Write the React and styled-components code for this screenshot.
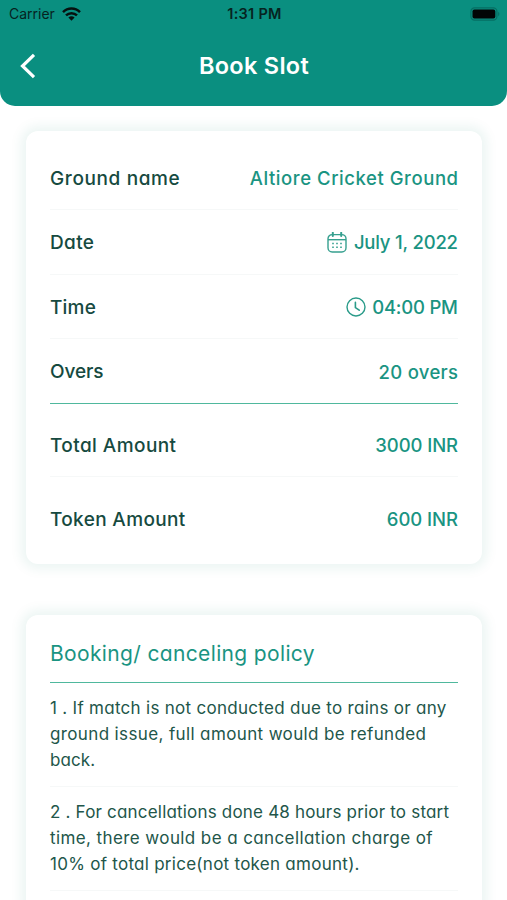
import React from 'react';
import styled, { createGlobalStyle, ThemeProvider } from 'styled-components';

const theme = {
  primary: '#0a8f80',
  value: '#1a9482',
  label: '#164a40',
  body: '#22564a',
  accentLine: '#4fb89d',
  line: '#f6f8f8',
};

const GlobalStyle = createGlobalStyle`
  * {
    box-sizing: border-box;
  }
  body {
    background: #fff;
    font-family: Inter, 'Open Sans', sans-serif;
    font-feature-settings: 'cv11' 1;
    margin: 0;
  }
`;

const Screen = styled.div`
  height: 900px;
  overflow: hidden;
  width: 507px;
`;

const Header = styled.header`
  background: ${({ theme }) => theme.primary};
  border-radius: 0 0 15px 15px;
  height: 106px;
`;

const StatusBar = styled.div`
  align-items: center;
  color: #06231f;
  display: grid;
  font-feature-settings: normal;
  font-size: 14px;
  grid-template-columns: 1fr auto 1fr;
  height: 27px;
  padding: 0 7px 0 9px;
`;

const Carrier = styled.div`
  align-items: center;
  display: flex;
  gap: 7px;
`;

const Clock = styled.div`
  font-size: 14.5px;
  font-weight: 600;
  letter-spacing: 0.3px;
`;

const BatteryBox = styled.div`
  display: flex;
  justify-content: flex-end;
`;

const TitleBar = styled.div`
  align-items: center;
  display: grid;
  grid-template-columns: 60px 1fr 60px;
  height: 77px;
`;

const BackButton = styled.button`
  background: none;
  border: 0;
  display: flex;
  padding: 0 0 0 19px;
`;

const Title = styled.h1`
  color: #fff;
  font-size: 23.5px;
  font-weight: 600;
  letter-spacing: 0.3px;
  margin: 0;
  padding-left: 1px;
  text-align: center;
`;

const Card = styled.section`
  background: #fff;
  border-radius: 12px;
  box-shadow: 0 0 12px 5px rgba(10, 125, 105, 0.08);
  margin: ${({ $top }) => $top}px 25px 0 26px;
  padding: ${({ $pad }) => $pad};
`;

const Row = styled.div`
  align-items: center;
  border-bottom: ${({ theme, $last }) => ($last ? 'none' : `1px solid ${theme.line}`)};
  display: flex;
  height: ${({ $height }) => $height}px;
  justify-content: space-between;
  line-height: 24px;
  padding-top: ${({ $offset }) => $offset || 0}px;
`;

const Separator = styled.div`
  background: ${({ theme }) => theme.accentLine};
  height: 1px;
`;

const Label = styled.span`
  color: ${({ theme }) => theme.label};
  font-size: 19px;
  font-weight: 500;
  letter-spacing: ${({ $tracking }) => $tracking}px;
  padding-top: 1px;
`;

const Value = styled.span`
  align-items: center;
  color: ${({ theme }) => theme.value};
  display: flex;
  font-size: 18.5px;
  font-weight: 500;
  gap: ${({ $gap }) => $gap || 0}px;
  letter-spacing: ${({ $tracking }) => $tracking}px;
  margin-right: ${({ $tracking }) => -$tracking}px;
`;

const PolicyTitle = styled.h2`
  color: ${({ theme }) => theme.value};
  font-size: 21px;
  font-weight: 400;
  height: 67px;
  letter-spacing: 0.35px;
  line-height: 77px;
  margin: 0;
`;

const PolicyItem = styled.div`
  border-bottom: 1px solid ${({ theme }) => theme.line};
  height: 104px;
  padding-top: 13px;
`;

const PolicyLine = styled.div`
  color: ${({ theme }) => theme.body};
  font-size: 17px;
  letter-spacing: ${({ $tracking }) => $tracking}px;
  line-height: 25.75px;
  white-space: nowrap;
`;

const WifiIcon = () => (
  <svg width="19" height="14" viewBox="0 0 19 14" fill="none" stroke="#06110f" strokeWidth="2.5">
    <path d="M1 5.2C5.8 0.4 13.2 0.4 18 5.2" />
    <path d="M4 8.4C7.1 5.4 11.9 5.4 15 8.4" />
    <path d="M9.5 13.7L6.4 10.5C8.1 8.9 10.9 8.9 12.6 10.5Z" fill="#06110f" stroke="none" />
  </svg>
);

const BatteryIcon = () => (
  <svg width="30" height="14" viewBox="0 0 30 14">
    <rect x="0.9" y="0.9" width="26" height="12.2" rx="3.6" fill="none" stroke="#066f63" strokeWidth="1.2" />
    <rect x="2.5" y="2.5" width="22.8" height="9" rx="1.9" fill="#020505" />
    <path d="M28.2 4.8C29.8 5.6 29.8 8.4 28.2 9.2Z" fill="#066f63" />
  </svg>
);

const BackIcon = () => (
  <svg width="17" height="26" viewBox="0 0 17 26" fill="none" stroke="#fff" strokeWidth="3.2">
    <path d="M15 1.8L3.5 13L15 24.2" />
  </svg>
);

const CalendarIcon = () => (
  <svg width="20" height="21" viewBox="0 0 20 21" fill="none" stroke="#36a08f" strokeWidth="1.4">
    <rect x="1" y="2.6" width="18" height="17.4" rx="4.2" />
    <path d="M1 7.7H19" />
    <path d="M5.8 0.7V4M14.2 0.7V4" strokeWidth="2" strokeLinecap="round" />
    <path d="M5.2 11.4H6.8M9.2 11.4H10.8M13.2 11.4H14.8M5.2 15.2H6.8M9.2 15.2H10.8M13.2 15.2H14.8" strokeWidth="1.5" />
  </svg>
);

const TimeIcon = () => (
  <svg width="20" height="20" viewBox="0 0 20 20" fill="none" stroke="#2a9b89" strokeWidth="1.4">
    <circle cx="10" cy="10" r="9" />
    <path d="M9.4 5.4V10.6L13.2 13.2" strokeWidth="1.6" strokeLinecap="round" />
  </svg>
);

const details = [
  { label: 'Ground name', labelTracking: 0.62, value: 'Altiore Cricket Ground', tracking: 0.55, height: 64, offset: 1 },
  { label: 'Date', labelTracking: 0.35, value: 'July 1, 2022', tracking: -0.2, height: 65, offset: 0, icon: <CalendarIcon />, gap: 7 },
  { label: 'Time', labelTracking: 0.2, value: '04:00 PM', tracking: -0.2, height: 64, offset: 1, icon: <TimeIcon />, gap: 6 },
  { label: 'Overs', labelTracking: -0.1, value: '20 overs', tracking: 0.3, height: 64, offset: 1, last: true },
];

const amounts = [
  { label: 'Total Amount', labelTracking: 0.42, value: '3000 INR', tracking: -0.1, height: 73, offset: 10 },
  { label: 'Token Amount', labelTracking: 0.35, value: '600 INR', tracking: -0.05, height: 74, offset: 10, last: true },
];

const policies = [
  [
    { text: '1 . If match is not conducted due to rains or any', tracking: 0.29 },
    { text: 'ground issue, full amount would be refunded', tracking: 0.37 },
    { text: 'back.', tracking: 0.1 },
  ],
  [
    { text: '2 . For cancellations done 48 hours prior to start', tracking: 0.19 },
    { text: 'time, there would be a cancellation charge of', tracking: 0.4 },
    { text: '10% of total price(not token amount).', tracking: 0.27 },
  ],
];

const DetailRow = ({
  label, labelTracking, value, tracking, height, offset, icon, gap, last,
}) => (
  <Row $height={height} $offset={offset} $last={last}>
    <Label $tracking={labelTracking}>{label}</Label>
    <Value $tracking={tracking} $gap={gap}>
      {icon}
      <span>{value}</span>
    </Value>
  </Row>
);

const App = () => (
  <ThemeProvider theme={theme}>
    <GlobalStyle />
    <Screen>
      <Header>
        <StatusBar>
          <Carrier>
            <span>Carrier</span>
            <WifiIcon />
          </Carrier>
          <Clock>1:31 PM</Clock>
          <BatteryBox>
            <BatteryIcon />
          </BatteryBox>
        </StatusBar>
        <TitleBar>
          <BackButton aria-label="Back">
            <BackIcon />
          </BackButton>
          <Title>Book Slot</Title>
        </TitleBar>
      </Header>
      <Card $top={25} $pad="15px 24px 13px">
        {details.map(item => <DetailRow key={item.label} {...item} />)}
        <Separator />
        {amounts.map(item => <DetailRow key={item.label} {...item} />)}
      </Card>
      <Card $top={51} $pad="0 24px 24px">
        <PolicyTitle>Booking/ canceling policy</PolicyTitle>
        <Separator />
        {policies.map(lines => (
          <PolicyItem key={lines[0].text}>
            {lines.map(({ text, tracking }) => (
              <PolicyLine key={text} $tracking={tracking}>{text}</PolicyLine>
            ))}
          </PolicyItem>
        ))}
      </Card>
    </Screen>
  </ThemeProvider>
);

export default App;
